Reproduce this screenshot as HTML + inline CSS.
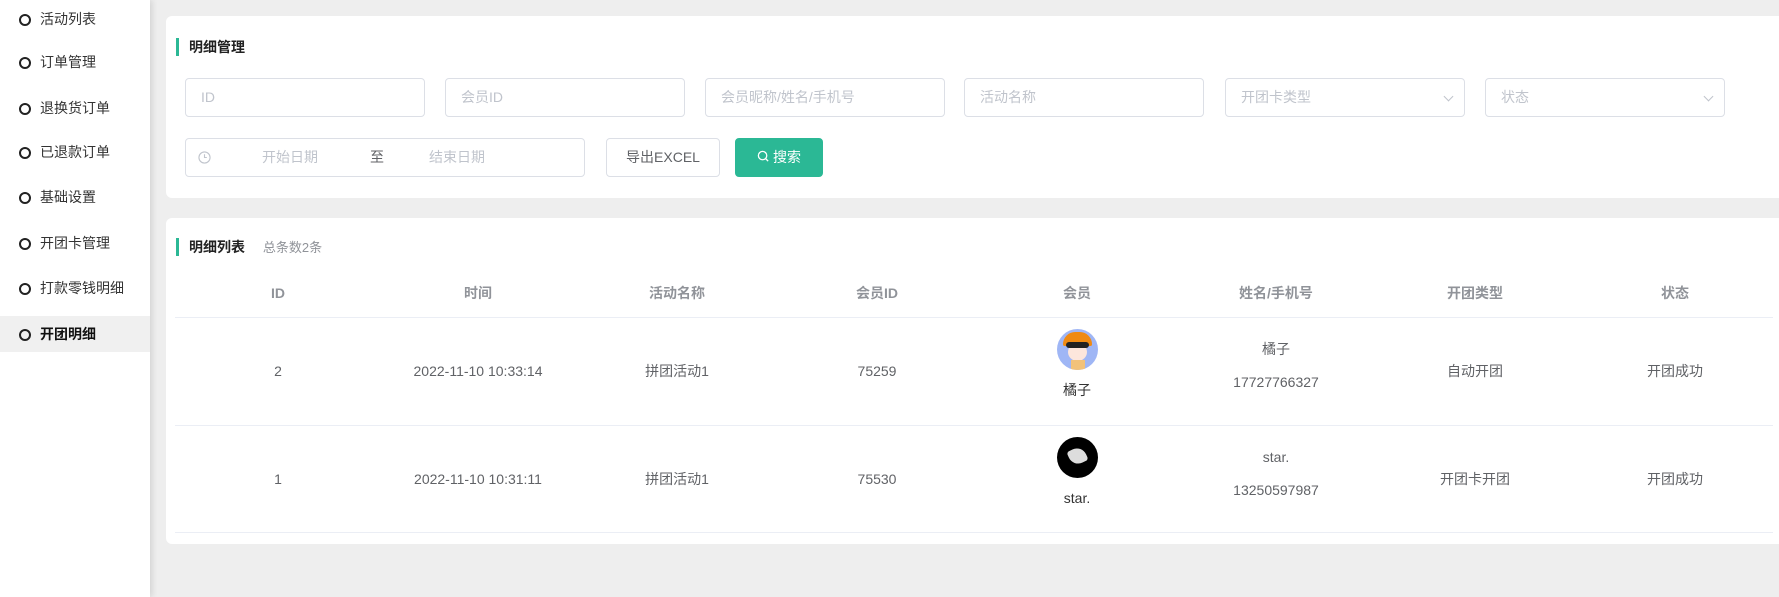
<!DOCTYPE html>
<html><head><meta charset="utf-8"><style>
*{margin:0;padding:0;box-sizing:border-box}
body{width:1779px;height:597px;background:#eeeeee;font-family:"Liberation Sans","Noto Sans CJK SC",sans-serif;font-size:14px;color:#606266;position:relative;overflow:hidden}
.side{position:absolute;left:0;top:0;width:150px;height:597px;background:#fff;box-shadow:2px 0 6px rgba(0,0,0,.12)}
.si{position:absolute;left:0;width:150px;height:36px;line-height:36px;padding-left:40px;color:#333;font-size:14px}
.si:before{content:"";position:absolute;left:19px;top:13px;width:8px;height:8px;border:2px solid #222;border-radius:50%}
.si.act{background:#f0f0f0;font-weight:bold;color:#111}
.card{position:absolute;left:166px;right:0;background:#fff;border-radius:6px 0 0 6px}
.ttl{position:absolute;left:10px;font-size:14px;font-weight:bold;color:#222;padding-left:13px;line-height:18px}
.ttl:before{content:"";position:absolute;left:0;top:0;width:3px;height:18px;background:#2bb895}
.inp{position:absolute;height:39px;border:1px solid #dcdfe6;border-radius:4px;color:#c0c4cc;line-height:37px;padding-left:15px;font-size:14px;background:#fff}
.arr{position:absolute;right:12px;top:14px;width:7px;height:7px;border-right:1px solid #c0c4cc;border-bottom:1px solid #c0c4cc;transform:rotate(45deg)}
.btn{position:absolute;height:39px;border-radius:4px;line-height:37px;text-align:center;font-size:14px}
.c{position:absolute;width:200px;text-align:center;transform:translateY(-50%)}
.h{font-weight:bold;color:#909399}
.line{position:absolute;left:9px;right:6px;height:1px;background:#ebeef5}
.av{position:absolute;width:41px;height:41px;border-radius:50%}
</style></head><body>
<div class="side">
<div class="si" style="top:1px">活动列表</div>
<div class="si" style="top:44px">订单管理</div>
<div class="si" style="top:90px">退换货订单</div>
<div class="si" style="top:134px">已退款订单</div>
<div class="si" style="top:179px">基础设置</div>
<div class="si" style="top:225px">开团卡管理</div>
<div class="si" style="top:270px">打款零钱明细</div>
<div class="si act" style="top:316px">开团明细</div>
</div>

<div class="card" style="top:16px;height:182px">
<div class="ttl" style="top:22px">明细管理</div>
<div class="inp" style="left:19px;top:62px;width:240px">ID</div>
<div class="inp" style="left:279px;top:62px;width:240px">会员ID</div>
<div class="inp" style="left:539px;top:62px;width:240px">会员昵称/姓名/手机号</div>
<div class="inp" style="left:798px;top:62px;width:240px">活动名称</div>
<div class="inp" style="left:1059px;top:62px;width:240px">开团卡类型<span class="arr"></span></div>
<div class="inp" style="left:1319px;top:62px;width:240px">状态<span class="arr"></span></div>
<div class="inp" style="left:19px;top:122px;width:400px;padding-left:12px">
<svg width="13" height="13" viewBox="0 0 14 14" style="position:absolute;left:12px;top:12px"><circle cx="7" cy="7" r="6" fill="none" stroke="#c0c4cc" stroke-width="1.2"/><path d="M7 3.5V7h2.5" fill="none" stroke="#c0c4cc" stroke-width="1.2"/></svg>
<span style="position:absolute;left:76px">开始日期</span><span style="position:absolute;left:184px;color:#606266">至</span><span style="position:absolute;left:243px">结束日期</span></div>
<div class="btn" style="left:440px;top:122px;width:114px;border:1px solid #dcdfe6;color:#606266">导出EXCEL</div>
<div class="btn" style="left:569px;top:122px;width:88px;background:#2bb895;color:#fff;border:1px solid #2bb895">
<svg width="13" height="13" viewBox="0 0 14 14" style="vertical-align:-1px;margin-right:3px"><circle cx="6" cy="6" r="4.5" fill="none" stroke="#fff" stroke-width="1.4"/><path d="M9.3 9.3L12 12" stroke="#fff" stroke-width="1.4"/></svg>搜索</div>
</div>

<div class="card" style="top:218px;height:326px">
<div class="ttl" style="top:20px">明细列表 <span style="font-weight:normal;color:#909399;margin-left:14px;font-size:13px">总条数2条</span></div>
<div class="c h" style="left:12px;top:75px">ID</div>
<div class="c h" style="left:212px;top:75px">时间</div>
<div class="c h" style="left:411px;top:75px">活动名称</div>
<div class="c h" style="left:611px;top:75px">会员ID</div>
<div class="c h" style="left:811px;top:75px">会员</div>
<div class="c h" style="left:1010px;top:75px">姓名/手机号</div>
<div class="c h" style="left:1209px;top:75px">开团类型</div>
<div class="c h" style="left:1409px;top:75px">状态</div>
<div class="line" style="top:99px"></div>

<div class="c" style="left:12px;top:153px">2</div>
<div class="c" style="left:212px;top:153px">2022-11-10 10:33:14</div>
<div class="c" style="left:411px;top:153px">拼团活动1</div>
<div class="c" style="left:611px;top:153px">75259</div>
<div class="av" style="left:891px;top:111px;background:#9fb6f5;overflow:hidden"><div style="position:absolute;left:6px;top:3px;width:29px;height:14px;background:#f08a12;border-radius:14px 14px 2px 2px"></div><div style="position:absolute;left:11px;top:14px;width:19px;height:18px;background:#fde6dc;border-radius:50%"></div><div style="position:absolute;left:9px;top:13px;width:23px;height:6px;background:#222;border-radius:3px"></div><div style="position:absolute;left:14px;top:31px;width:14px;height:10px;background:#f2c27a"></div></div>
<div class="c" style="left:811px;top:172px;color:#333">橘子</div>
<div class="c" style="left:1010px;top:131px">橘子</div>
<div class="c" style="left:1010px;top:164px">17727766327</div>
<div class="c" style="left:1209px;top:153px">自动开团</div>
<div class="c" style="left:1409px;top:153px">开团成功</div>
<div class="line" style="top:207px"></div>

<div class="c" style="left:12px;top:261px">1</div>
<div class="c" style="left:212px;top:261px">2022-11-10 10:31:11</div>
<div class="c" style="left:411px;top:261px">拼团活动1</div>
<div class="c" style="left:611px;top:261px">75530</div>
<div class="av" style="left:891px;top:219px;background:#000;overflow:hidden"><div style="position:absolute;left:12px;top:11px;width:17px;height:16px;background:#ddd;transform:rotate(-25deg);border-radius:3px 10px 3px 10px"></div></div>
<div class="c" style="left:811px;top:280px;color:#333">star.</div>
<div class="c" style="left:1010px;top:239px">star.</div>
<div class="c" style="left:1010px;top:272px">13250597987</div>
<div class="c" style="left:1209px;top:261px">开团卡开团</div>
<div class="c" style="left:1409px;top:261px">开团成功</div>
<div class="line" style="top:314px"></div>
</div>
</body></html>
